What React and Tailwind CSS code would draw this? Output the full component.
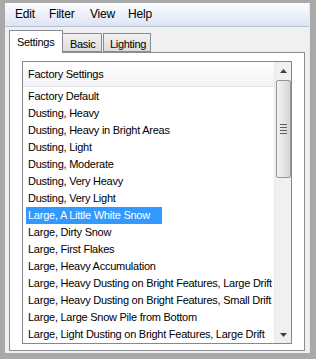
import React from "react";

const items = [
  "Factory Default",
  "Dusting, Heavy",
  "Dusting, Heavy in Bright Areas",
  "Dusting, Light",
  "Dusting, Moderate",
  "Dusting, Very Heavy",
  "Dusting, Very Light",
  "Large, A Little White Snow",
  "Large, Dirty Snow",
  "Large, First Flakes",
  "Large, Heavy Accumulation",
  "Large, Heavy Dusting on Bright Features, Large Drift",
  "Large, Heavy Dusting on Bright Features, Small Drift",
  "Large, Large Snow Pile from Bottom",
  "Large, Light Dusting on Bright Features, Large Drift",
];

export default function App() {
  return (
    <div
      className="w-[316px] h-[359px] bg-[#a9a9a9] pt-[3px] pl-[5px] pr-[6px] pb-[6px] text-[11px] tracking-[-0.3px] text-black"
      style={{ fontFamily: "'Liberation Sans', Arial, sans-serif" }}
    >
      <div className="w-full h-full bg-[#f0f0f0] flex flex-col border-r border-[#e8e8e8]">
        <div className="h-[24px] flex items-center pl-[10px] text-[12px] tracking-[-0.2px] bg-gradient-to-b from-[#fbfcfe] to-[#dde4f4] border-b border-[#b8c0d6]">
          <span className="w-[34px]">Edit</span>
          <span className="w-[41px]">Filter</span>
          <span className="w-[38px]">View</span>
          <span>Help</span>
        </div>
        <div className="flex items-end h-[24px] pl-[4px] mt-[2px]">
          <div className="h-[23px] w-[54px] pl-[7px] pt-[3px] bg-white border border-[#898c95] border-b-0 relative z-10 -mb-px">Settings</div>
          <div className="h-[19px] w-[39px] pl-[7px] pt-[2px] bg-gradient-to-b from-[#f2f2f2] to-[#dcdcdc] border border-[#898c95] border-l-0">Basic</div>
          <div className="h-[19px] w-[48px] pl-[6px] pt-[2px] ml-[1px] bg-gradient-to-b from-[#f2f2f2] to-[#dcdcdc] border border-[#898c95]">Lighting</div>
        </div>
        <div className="flex-1 mx-[4px] mb-[2px] bg-white border border-[#898c95] pt-[8px] px-[12px] pb-[6px]">
          <div className="h-full border border-[#828790] flex">
            <div className="flex-1 flex flex-col overflow-hidden tracking-[-0.25px]">
              <div className="h-[25px] flex items-center pl-[5px] bg-gradient-to-b from-white to-[#f3f3f5] border-b border-[#e3e5ea]">
                Factory Settings
              </div>
              <div className="flex flex-col pt-[1px]">
                {items.map((t, i) => (
                  <div
                    key={i}
                    className={
                      "h-[17px] leading-[17px] ml-[3px] pl-[2px] whitespace-nowrap " +
                      (i === 7 ? "bg-[#3399ff] text-white w-[136px]" : "")
                    }
                  >
                    {t}
                  </div>
                ))}
              </div>
            </div>
            <div className="w-[17px] bg-[#f0f0f0] flex flex-col items-center border-l border-[#e8e8e8]">
              <div className="h-[17px] flex items-center justify-center">
                <svg width="7" height="4" viewBox="0 0 7 4"><path d="M0 4 L3.5 0 L7 4 Z" fill="#404040" /></svg>
              </div>
              <div className="w-[15px] h-[98px] mt-[1px] rounded-[2px] border border-[#969696] bg-gradient-to-r from-[#f2f2f2] to-[#d6d6d6] flex items-center justify-center">
                <div className="flex flex-col gap-[2px]">
                  <div className="w-[7px] h-px bg-[#606060]" />
                  <div className="w-[7px] h-px bg-[#606060]" />
                  <div className="w-[7px] h-px bg-[#606060]" />
                  <div className="w-[7px] h-px bg-[#606060]" />
                </div>
              </div>
              <div className="flex-1" />
              <div className="h-[17px] flex items-center justify-center">
                <svg width="7" height="4" viewBox="0 0 7 4"><path d="M0 0 L3.5 4 L7 0 Z" fill="#404040" /></svg>
              </div>
            </div>
          </div>
        </div>
      </div>
    </div>
  );
}
